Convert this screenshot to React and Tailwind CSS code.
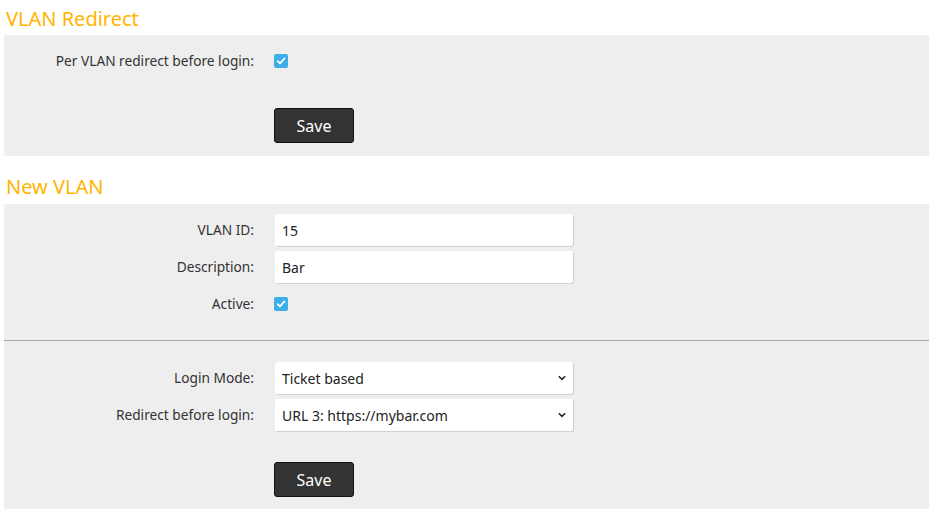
import React, { useState } from "react";

const Check = ({ checked, onChange }) => (
  <button
    type="button"
    onClick={onChange}
    className={`w-[14px] h-[14px] -ml-px rounded-[2px] flex items-center justify-center ${checked ? "bg-[#3daee9]" : "bg-white border border-[#aaa]"}`}
  >
    {checked && (
      <svg width="10" height="10" viewBox="0 0 10 10" fill="none">
        <path d="M1.6 5.1 L4 7.4 L8.5 2.4" stroke="white" strokeWidth="1.7" strokeLinecap="round" strokeLinejoin="round" />
      </svg>
    )}
  </button>
);

const Label = ({ children }) => (
  <label className="text-right text-[13.7px] text-[#333] pt-px">{children}</label>
);

const TextField = ({ value }) => (
  <input
    defaultValue={value}
    className="h-[32px] w-[298px] bg-white rounded-[2px] px-[7px] text-[14px] text-[#222] outline-none shadow-[1px_1px_0_#d0d0d0]"
  />
);

const SelectField = ({ value, options }) => (
  <div className="relative h-[32px] w-[298px]">
    <select
      defaultValue={value}
      className="appearance-none h-full w-full bg-white rounded-[2px] pl-[7px] pr-6 text-[14px] text-[#222] outline-none shadow-[1px_1px_0_#d0d0d0]"
    >
      {options.map((o) => (
        <option key={o}>{o}</option>
      ))}
    </select>
    <svg className="absolute right-[7px] top-[13px] pointer-events-none" width="8" height="6" viewBox="0 0 8 6" fill="none">
      <path d="M0.8 1.2 L4 4.4 L7.2 1.2" stroke="#222" strokeWidth="1.5" />
    </svg>
  </div>
);

const SaveButton = () => (
  <button className="h-[35px] w-[80px] bg-[#333] border border-[#111] rounded-[3px] text-white text-[16px]">
    Save
  </button>
);

const Row = ({ label, children }) => (
  <div className="grid grid-cols-[250px_298px] gap-x-[21px] items-center h-[32px]">
    <Label>{label}</Label>
    <div className="flex items-center">{children}</div>
  </div>
);

const App = () => {
  const [perVlan, setPerVlan] = useState(true);
  const [active, setActive] = useState(true);

  return (
    <div className="bg-white min-h-screen w-[929px] font-['Noto_Sans',sans-serif]">
      <h2 className="text-[#ffb400] text-[20px] leading-[35px] pl-[6px] pt-[1px] h-[35px]">VLAN Redirect</h2>
      <div className="ml-[4px] bg-[#eeeeee] rounded-l-[3px] pt-[10px] pb-[13px]">
        <Row label="Per VLAN redirect before login:">
          <Check checked={perVlan} onChange={() => setPerVlan(!perVlan)} />
        </Row>
        <div className="pl-[270px] mt-[31px]">
          <SaveButton />
        </div>
      </div>

      <h2 className="text-[#ffb400] text-[20px] leading-[48px] pl-[6px] pt-[7px] h-[48px]">New VLAN</h2>
      <div className="ml-[4px] bg-[#eeeeee] rounded-l-[3px] pt-[10px] pb-[12px]">
        <div className="flex flex-col gap-[5px]">
          <Row label="VLAN ID:">
            <TextField value="15" />
          </Row>
          <Row label="Description:">
            <TextField value="Bar" />
          </Row>
          <Row label="Active:">
            <Check checked={active} onChange={() => setActive(!active)} />
          </Row>
        </div>
        <div className="h-px bg-[#a6a6a6] mt-[20px] mb-[21px]" />
        <div className="flex flex-col gap-[5px]">
          <Row label="Login Mode:">
            <SelectField value="Ticket based" options={["Ticket based", "Click-through", "Open"]} />
          </Row>
          <Row label="Redirect before login:">
            <SelectField
              value="URL 3: https://mybar.com"
              options={["None", "URL 1: https://foo.com", "URL 2: https://bar.com", "URL 3: https://mybar.com"]}
            />
          </Row>
        </div>
        <div className="pl-[270px] mt-[31px]">
          <SaveButton />
        </div>
      </div>
    </div>
  );
};

export default App;
